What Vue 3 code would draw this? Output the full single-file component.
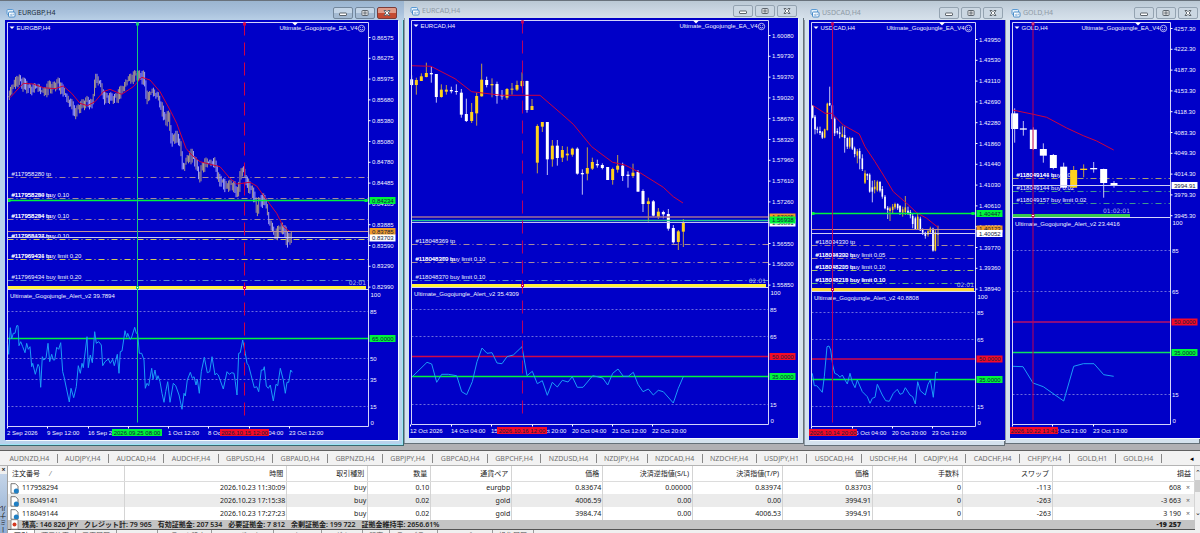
<template>
    <div class="terminal">
        <main class="workspace">
            <section v-for="c in charts" :key="c.name" class="window" :class="[c.kind, { active: c.active }]">
                <header class="titlebar">
                    <svg class="app-icon" viewBox="0 0 10 10">
                        <rect x="1" y="1.5" width="6.5" height="5" rx="1" fill="#e4f1fc" stroke="#5a9ad4" />
                        <rect x="2.5" y="4" width="6.5" height="5" rx="1" fill="#fff" stroke="#4a8cc8" />
                        <path d="M4.3 7.7V6.2M5.8 8V5.7M7.3 7.2V5.7" stroke="#4a8cc8" stroke-width=".7" />
                    </svg>
                    <h2>{{ c.name }},H4</h2>
                    <div class="controls">
                        <button type="button" aria-label="Minimize">
                            <svg viewBox="0 0 10 8"><rect x="1.5" y="4" width="7" height="2.5" rx=".5" /></svg>
                        </button>
                        <button type="button" aria-label="Maximize">
                            <svg viewBox="0 0 10 8"><rect x="2" y="1.5" width="6" height="5" rx=".5" /><rect x="4" y="3" width="2" height="2" /></svg>
                        </button>
                        <button type="button" class="close" aria-label="Close">
                            <svg viewBox="0 0 10 8"><path d="M2 1.5h2l1 1.2 1-1.2h2L6.2 4 8 6.5H6L5 5.3 4 6.5H2L3.8 4z" /></svg>
                        </button>
                    </div>
                </header>

                <svg class="chart" :viewBox="c.box">
                    <!-- order levels -->
                    <template v-for="o in c.orders" :key="o.y">
                        <line :x1="c.l" :x2="c.r" :y1="o.y" :y2="o.y" :stroke="o.color" stroke-dasharray="6 3 1 3" />
                        <text v-for="t in o.texts" :key="t" :x="c.l + 4" :y="o.y - 2">{{ t }}</text>
                    </template>

                    <!-- prices and moving average -->
                    <g v-for="(k, i) in c.candles" :key="i" :fill="k[5] ? '#ffd21c' : '#fff'">
                        <rect class="wick" :x="c.ox + k[0] / 3 - 0.5" :y="k[1] / 3" width="1" :height="(k[2] - k[1]) / 3" />
                        <rect :x="c.ox + k[0] / 3 - c.body / 2" :y="k[3] / 3" :width="c.body" :height="(k[4] - k[3]) / 3" />
                    </g>
                    <template v-if="c.bars">
                        <path class="bars down" :d="c.bars.down" />
                        <path class="bars up" :d="c.bars.up" />
                    </template>
                    <polyline class="average" :points="path(c.average, c.ox, 0)" />

                    <!-- price lines -->
                    <template v-for="p in c.prices" :key="p.y">
                        <line :x1="c.l" :x2="c.r" :y1="p.y" :y2="p.y" :stroke="p.color" :stroke-width="p.wide ? 1.4 : 1" />
                        <g v-if="p.ends" :fill="p.color">
                            <rect :x="c.l" :y="p.y - 1.5" width="3" height="3" />
                            <rect :x="c.r - 4" :y="p.y - 1.5" width="3" height="3" />
                        </g>
                    </template>

                    <!-- candle countdown -->
                    <rect :x="c.l" :y="c.split - 3.5" :width="c.timerEnd - c.l" height="3" :fill="c.timerColor" />
                    <text class="timer" :x="c.timerEnd" :y="c.split - 5">{{ c.timer }}</text>

                    <!-- indicator -->
                    <template v-for="v in c.levels" :key="v.n">
                        <line v-if="!v.color" class="level" :x1="c.l" :x2="c.r" :y1="v.y" :y2="v.y" />
                        <line v-else :x1="c.l" :x2="c.r" :y1="v.y" :y2="v.y" :stroke="v.color" stroke-width="1.5" />
                        <text v-if="!v.color" :x="c.r + 1.5" :y="v.y + 2">{{ v.n }}</text>
                    </template>
                    <text :x="c.r + 2" :y="c.split + 7">100</text>
                    <text :x="c.r + 2" :y="c.bottom - 2">0</text>
                    <polyline class="indicator" :points="path(c.indicator, c.ox, 220)" />
                    <text :x="c.l + 2.5" :y="c.split + 8">Ultimate_Gogojungle_Alert_v2 {{ c.value }}</text>

                    <!-- frame -->
                    <path class="frame" :d="`M${c.l} ${c.bottom}V${c.top}H${c.r}V${c.bottom}ZM${c.l} ${c.split}H${c.r}`" />
                    <path :d="`M${c.l + 2} ${c.top + 4}h5l-2.5 2.5z`" fill="#fff" />
                    <path :d="`M${c.marker - 3} ${c.top}h6l-3 3z`" fill="#fff" />
                    <text :x="c.l + 9" :y="c.top + 7">{{ c.name }},H4</text>
                    <text class="end" :x="c.r - 11" :y="c.top + 7">Ultimate_Gogojungle_EA_V4</text>
                    <g :transform="`translate(${c.r - 7} ${c.top + 6})`" fill="none" stroke="#fff" stroke-width=".7">
                        <circle r="3.2" />
                        <path d="M-1.7.7Q0 2.5 1.7.7M-1.2-1.4v1M1.2-1.4v1" />
                    </g>

                    <!-- vertical marks -->
                    <g v-for="v in c.verticals" :key="v.x" :stroke="v.color">
                        <line :x1="v.x" :x2="v.x" :y1="c.top" :y2="c.bottom - 4" :stroke-dasharray="v.dash ? '13 7' : 'none'" />
                        <rect :x="v.x - 1" :y="c.top + 0.5" width="2" height="2" fill="#fff" />
                        <rect :x="v.x - 1" :y="c.split - 3" width="2" height="2" fill="#fff" />
                    </g>

                    <!-- price scale -->
                    <g v-for="(n, i) in c.scale" :key="n">
                        <line :x1="c.r" :x2="c.r + 2" :y1="c.scaleTop + i * 20.8" :y2="c.scaleTop + i * 20.8" stroke="#fff" />
                        <text :x="c.r + 3.5" :y="c.scaleTop + 2 + i * 20.8">{{ n }}</text>
                    </g>
                    <g v-for="t in c.tags" :key="t.y">
                        <rect :x="c.r + 1" :y="t.y - 3.5" width="26" height="7" :fill="t.color" />
                        <text class="dark" :x="c.r + 3.5" :y="t.y + 2">{{ t.n }}</text>
                    </g>

                    <!-- time scale -->
                    <g v-for="d in c.dates" :key="d[0]">
                        <line :x1="d[0] + 0.5" :x2="d[0] + 0.5" :y1="c.bottom" :y2="c.bottom + 2" stroke="#fff" />
                        <text :x="d[0]" :y="c.bottom + 8">{{ d[1] }}</text>
                    </g>
                    <g v-for="d in c.stamps" :key="d.x">
                        <rect :x="d.x" :y="c.bottom + 2.5" :width="d.w" height="7" :fill="d.color" />
                        <text class="dark mid" :x="d.x + d.w / 2" :y="c.bottom + 8">{{ d.n }}</text>
                    </g>
                </svg>
            </section>
        </main>

        <nav class="symbols">
            <div class="symbol-list">
                <button v-for="s in symbols" :key="s" type="button">{{ s }}</button>
            </div>
            <span class="arrow">◂</span>
        </nav>

        <section class="toolbox">
            <aside class="side">
                <button type="button" aria-label="Close">×</button>
                <div class="side-title"><span>ターミナル</span></div>
            </aside>

            <div class="orders">
                <table>
                    <colgroup>
                        <col v-for="(w, i) in widths" :key="i" :style="{ width: w / 11.87 + '%' }">
                    </colgroup>
                    <thead>
                        <tr>
                            <th v-for="(h, i) in headings" :key="i">{{ h }}<i v-if="i == 0">/</i></th>
                        </tr>
                    </thead>
                    <tbody>
                        <tr v-for="row in rows" :key="row[0]">
                            <td v-for="(cell, i) in row" :key="i">
                                <svg v-if="i == 0" class="doc" viewBox="0 0 9 11">
                                    <path d="M1 .7h4.5L8 3.2v7H1z" fill="#fff" stroke="#555" stroke-width=".8" />
                                    <circle cx="6.3" cy="8" r="2.5" fill="#1f7fc4" />
                                </svg>{{ cell }}<button v-if="i == row.length - 1" type="button" aria-label="Close order">×</button>
                            </td>
                        </tr>
                    </tbody>
                </table>

                <div class="summary">
                    <svg class="doc" viewBox="0 0 9 11">
                        <path d="M1 .7h7v9.5H1z" fill="#fff" stroke="#777" stroke-width=".8" />
                        <circle cx="4.5" cy="5.5" r="2" fill="#d43a22" />
                    </svg>
                    <span v-for="s in summary" :key="s">{{ s }}</span>
                    <strong>-19 257</strong>
                </div>

                <nav class="pages">
                    <button v-for="(p, i) in pages" :key="p" type="button" :class="{ select: i == 0 }">{{ p }}</button>
                </nav>
            </div>

            <div class="scroll"><span>⌃</span><div class="thumb"></div><span>⌄</span></div>
        </section>
    </div>
</template>

<script setup>
const GREEN = '#00f43c';
const RED = '#f40a28';
const TAN = '#a88c9c';
const ORANGE = '#f09a28';

// curves and candles are stored in thirds of a chart unit
function path(points, ox, oy) {
    const out = [];
    for (let i = 0; i < points.length; i += 2) {
        out.push(`${(ox + points[i] / 3).toFixed(1)},${(oy + points[i + 1] / 3).toFixed(1)}`);
    }
    return out.join(' ');
}

function makeBars(points) {
    let up = '';
    let down = '';
    let i = 0;
    let n = 0;
    let last = points[1];
    for (let x = points[0]; x <= points[points.length - 2]; x += 3.76) {
        while (i < points.length - 4 && x > points[i + 2]) i += 2;
        const t = (x - points[i]) / (points[i + 2] - points[i]);
        const y = points[i + 1] + t * (points[i + 3] - points[i + 1]);
        const a = 2 + ((n * n * 7 + n) % 19);
        const b = 2 + ((n * n * 5 + n * 3) % 23);
        const px = (x / 3).toFixed(1);
        const bar = `M${px} ${((Math.min(y, last) - a) / 3).toFixed(1)}V${((Math.max(y, last) + b) / 3).toFixed(1)}`;
        if (n % 3 == 0 || y < last) up += bar;
        else down += bar;
        last = y;
        n++;
    }
    return { up, down };
}

const charts = [
    {
        name: 'EURGBP', kind: 'wide', active: true, box: '5 20 393 420', ox: 0,
        l: 7.5, r: 368.5, top: 22.5, split: 289.5, bottom: 426.5, marker: 295, value: '39.7894',
        timer: '02:01', timerEnd: 366, timerColor: '#fff23c', body: 1,
        scaleTop: 37.5,
        scale: ['0.86575', '0.86275', '0.85975', '0.85680', '0.85380', '0.85080', '0.84780', '0.84485', '0.84185', '0.83885', '0.83590', '0.83290', '0.82990'],
        tags: [
            { y: 200.5, n: '0.84234', color: GREEN },
            { y: 231.5, n: '0.83785', color: ORANGE },
            { y: 238, n: '0.83703', color: '#fff' }
        ],
        prices: [
            { y: 200.5, color: GREEN, wide: true, ends: true },
            { y: 231.5, color: '#c09098' },
            { y: 237.5, color: '#c8c8f4' }
        ],
        orders: [
            { y: 177.5, color: TAN, texts: ['#117958280 tp'] },
            { y: 198.5, color: TAN, texts: ['#117958280 buy 0.10', '#117958294 tp'] },
            { y: 219.5, color: TAN, texts: ['#117958294 buy 0.10', '#117958284 tp'] },
            { y: 239.5, color: '#d4cc58', texts: ['#117969434 buy 0.10', '#117958137 tp'] },
            { y: 259.5, color: '#d4cc58', texts: ['#117969431 buy limit 0.20', '#117969434 tp'] },
            { y: 280.5, color: '#5a8cd0', texts: ['#117969434 buy limit 0.20'] }
        ],
        levels: [
            { y: 311.5, n: 85 }, { y: 338.5, n: 65, color: GREEN }, { y: 358.5, n: 50 }, { y: 379.5, n: 35 }, { y: 406.5, n: 15 }
        ],
        verticals: [{ x: 137.5, color: '#18c878' }, { x: 244.5, color: '#d00048', dash: true }],
        dates: [[7, '2 Sep 2026'], [47, '9 Sep 12:00'], [88, '16 Sep 20:00'], [128, ''], [168, '1 Oct 12:00'], [208, '8 Oct 20:00'], [249, '16 Oct 04:00'], [289, '23 Oct 12:00']],
        stamps: [
            { x: 112, w: 50, n: '2026.09.25 08:00', color: GREEN },
            { x: 220, w: 49, n: '2026.10.15 12:00', color: RED }
        ],
        candles: [],
        bars: makeBars([24, 290, 40, 255, 55, 230, 70, 255, 90, 262, 110, 262, 125, 275, 150, 260, 175, 245, 190, 275, 205, 305, 222, 335, 240, 315, 262, 300, 277, 310, 285, 240, 300, 250, 312, 290, 345, 290, 365, 275, 378, 245, 400, 225, 415, 220, 430, 235, 440, 290, 455, 275, 472, 290, 485, 320, 495, 360, 505, 350, 515, 425, 525, 400, 538, 425, 548, 510, 560, 475, 575, 465, 590, 490, 597, 535, 605, 500, 615, 485, 640, 490, 655, 530, 675, 555, 700, 550, 713, 590, 720, 530, 728, 505, 740, 545, 755, 570, 765, 595, 770, 640, 775, 600, 795, 600, 805, 660, 823, 705, 833, 690, 845, 675, 855, 700, 862, 725, 870, 705, 877, 705]),
        average: [30, 293, 70, 250, 100, 252, 130, 263, 165, 266, 190, 258, 215, 280, 240, 310, 262, 317, 285, 305, 310, 275, 330, 268, 365, 283, 400, 260, 425, 232, 450, 240, 480, 275, 510, 330, 530, 370, 558, 445, 575, 465, 600, 485, 660, 500, 690, 535, 710, 552, 750, 547, 770, 558, 800, 600, 830, 640, 850, 680, 870, 695],
        indicator: [22, 365, 26, 403, 31, 323, 35, 357, 40, 340, 45, 340, 50, 317, 54, 317, 57, 377, 62, 365, 68, 380, 75, 398, 80, 370, 85, 388, 90, 380, 95, 440, 98, 430, 106, 463, 114, 433, 118, 440, 122, 502, 127, 410, 131, 420, 138, 415, 144, 370, 149, 425, 155, 403, 160, 420, 164, 420, 170, 382, 176, 388, 182, 368, 188, 455, 192, 470, 208, 546, 213, 505, 221, 533, 229, 500, 235, 437, 241, 460, 246, 430, 250, 443, 261, 350, 265, 443, 271, 405, 277, 428, 284, 335, 289, 370, 296, 365, 304, 375, 308, 437, 315, 425, 325, 417, 331, 430, 338, 418, 343, 437, 352, 403, 357, 460, 361, 395, 366, 393, 375, 332, 380, 352, 383, 340, 390, 358, 394, 355, 404, 322, 409, 340, 413, 340, 418, 400, 425, 400, 432, 420, 436, 505, 441, 490, 446, 497, 455, 445, 459, 478, 465, 450, 470, 480, 474, 467, 480, 485, 486, 520, 492, 547, 497, 515, 503, 485, 510, 547, 520, 490, 527, 497, 537, 525, 546, 568, 552, 520, 556, 528, 562, 480, 571, 457, 577, 475, 582, 470, 588, 495, 592, 478, 598, 520, 604, 455, 613, 412, 622, 458, 629, 455, 636, 410, 645, 465, 649, 460, 655, 465, 670, 507, 681, 455, 688, 463, 695, 458, 702, 460, 706, 485, 711, 525, 716, 400, 721, 398, 728, 360, 736, 400, 741, 430, 746, 437, 757, 480, 763, 503, 770, 500, 776, 515, 784, 450, 790, 450, 793, 440, 799, 498, 805, 505, 811, 495, 820, 543, 828, 493, 833, 497, 841, 445, 850, 480, 856, 520, 861, 487, 866, 487, 872, 450, 877, 457]
    },
    {
        name: 'EURCAD', kind: 'wide raised', box: '409 18 389 420', ox: 405,
        l: 411.5, r: 768.5, top: 20.5, split: 287.5, bottom: 424.5, marker: 696, value: '35.4309',
        timer: '02:01', timerEnd: 766, timerColor: '#fff23c', body: 3,
        scaleTop: 35.5,
        scale: ['1.60080', '1.59730', '1.59370', '1.59020', '1.58670', '1.58320', '1.57960', '1.57610', '1.57260', '1.56900', '1.56550', '1.56200', '1.55850'],
        tags: [
            { y: 217, n: '1.57005', color: ORANGE },
            { y: 223, n: '1.56891', color: '#fff' },
            { y: 220, n: '1.56938', color: GREEN }
        ],
        prices: [
            { y: 217, color: '#a07098', wide: true },
            { y: 220.5, color: '#20c890', wide: true },
            { y: 222.5, color: '#c0c0f4' }
        ],
        orders: [
            { y: 244.5, color: TAN, texts: ['#118048369 tp'] },
            { y: 262.5, color: TAN, texts: ['#118048369 buy limit 0.10', '#118048370 tp'] },
            { y: 280.5, color: '#5a8cd0', texts: ['#118048370 buy limit 0.10'] }
        ],
        levels: [
            { y: 309.5, n: 85 }, { y: 336.5, n: 65 }, { y: 356.5, n: 50, color: '#d00848' }, { y: 376.5, n: 35, color: GREEN }, { y: 404.5, n: 15 }
        ],
        verticals: [{ x: 522.5, color: '#b80060', dash: true }],
        dates: [[410, '12 Oct 2026'], [451, '14 Oct 04:00'], [491, '15 Oct 12:00'], [532, '16 Oct 20:00'], [572, '20 Oct 04:00'], [612, '21 Oct 12:00'], [652, '22 Oct 20:00']],
        stamps: [{ x: 497, w: 50, n: '2026.10.16 12:00', color: RED }],
        candles: [
            [20, 226, 258, 238, 255, 0], [34, 233, 284, 240, 255, 1], [49, 220, 243, 229, 243, 1], [64, 188, 232, 219, 231, 1],
            [79, 200, 248, 219, 223, 0], [94, 222, 308, 222, 291, 0], [109, 253, 293, 269, 291, 1], [124, 255, 284, 269, 275, 1],
            [139, 260, 280, 270, 274, 0], [154, 253, 284, 273, 276, 0], [169, 267, 353, 278, 344, 0], [184, 296, 366, 342, 363, 0],
            [200, 309, 369, 336, 363, 1], [215, 278, 377, 288, 340, 1], [230, 191, 290, 239, 289, 1], [245, 230, 262, 240, 255, 0],
            [261, 235, 292, 252, 256, 1], [276, 245, 311, 252, 288, 0], [291, 270, 299, 285, 289, 0], [306, 264, 299, 267, 293, 1],
            [321, 249, 284, 266, 269, 1], [336, 242, 273, 255, 269, 1], [351, 217, 262, 243, 258, 1], [366, 242, 338, 243, 330, 0],
            [381, 297, 330, 318, 330, 1], [397, 373, 520, 378, 488, 1], [412, 366, 396, 366, 380, 1], [427, 366, 525, 366, 478, 0],
            [442, 420, 500, 437, 478, 1], [457, 420, 497, 437, 474, 0], [472, 438, 486, 450, 473, 1], [487, 440, 482, 461, 466, 1],
            [502, 443, 470, 446, 464, 1], [517, 442, 524, 446, 521, 0], [532, 508, 584, 519, 523, 0], [547, 442, 541, 504, 521, 1],
            [562, 473, 510, 486, 506, 1], [577, 479, 503, 492, 496, 0], [592, 490, 508, 495, 504, 0], [608, 501, 540, 501, 540, 0],
            [623, 503, 554, 507, 540, 1], [638, 465, 518, 497, 509, 1], [653, 488, 543, 497, 528, 0], [669, 514, 563, 524, 528, 0],
            [684, 491, 534, 518, 528, 1], [699, 510, 575, 516, 575, 0], [714, 568, 636, 573, 612, 0], [730, 593, 665, 604, 612, 1],
            [745, 600, 650, 604, 647, 0], [760, 624, 657, 635, 651, 1], [775, 632, 655, 636, 643, 0], [790, 627, 692, 642, 686, 0],
            [805, 675, 731, 684, 727, 0], [820, 690, 750, 694, 726, 1], [835, 657, 741, 669, 695, 1]
        ],
        average: [18, 197, 78, 199, 150, 236, 200, 275, 290, 286, 405, 286, 470, 342, 505, 373, 560, 440, 600, 470, 623, 487, 660, 495, 705, 518, 775, 562, 805, 590, 834, 609],
        indicator: [22, 470, 66, 427, 80, 432, 95, 487, 110, 463, 130, 463, 155, 467, 170, 515, 185, 524, 202, 485, 216, 425, 231, 384, 246, 400, 261, 398, 276, 429, 291, 431, 306, 410, 325, 405, 351, 380, 366, 467, 382, 454, 397, 491, 412, 482, 427, 526, 442, 487, 457, 501, 472, 481, 489, 486, 502, 470, 517, 502, 534, 502, 563, 467, 593, 474, 608, 495, 623, 460, 639, 447, 655, 469, 670, 469, 685, 457, 699, 493, 714, 515, 730, 507, 745, 525, 760, 511, 775, 515, 805, 549, 820, 505, 835, 470]
    },
    {
        name: 'USDCAD', kind: 'narrow', box: '809 20 196 420', ox: 800,
        l: 811.5, r: 975.5, top: 22.5, split: 291.5, bottom: 426.5, marker: 942, value: '40.8808',
        timer: '02:01', timerEnd: 974, timerColor: '#ffd83c', body: 1.6,
        scaleTop: 39.5,
        scale: ['1.43950', '1.43530', '1.43110', '1.42690', '1.42280', '1.41860', '1.41440', '1.41030', '1.40610', '1.40190', '1.39770', '1.39360', '1.38940'],
        tags: [
            { y: 213.5, n: '1.40447', color: GREEN },
            { y: 229, n: '1.40123', color: ORANGE },
            { y: 233.5, n: '1.40052', color: '#fff' }
        ],
        prices: [
            { y: 213.5, color: GREEN, wide: true, ends: true },
            { y: 229.5, color: '#c09098' },
            { y: 233.5, color: '#d0d0f4' }
        ],
        orders: [
            { y: 245.5, color: TAN, texts: ['#118034330 tp'] },
            { y: 258.5, color: TAN, texts: ['#118034330 buy limit 0.05', '#118048202 tp'] },
            { y: 270.5, color: '#a8c868', texts: ['#118048200 buy limit 0.10', '#118048215 tp'] },
            { y: 283.5, color: '#58b480', texts: ['#118048218 buy limit 0.10', '#118048219 buy limit 0.10'] }
        ],
        levels: [
            { y: 312.5, n: 85 }, { y: 339.5, n: 65 }, { y: 359, n: 50, color: '#d00848' }, { y: 379.5, n: 35, color: GREEN }, { y: 406.5, n: 15 }
        ],
        verticals: [{ x: 832.5, color: '#b80060' }],
        dates: [[811, ''], [852, '16 Oct 04:00'], [892, '20 Oct 20:00'], [932, '23 Oct 12:00']],
        stamps: [{ x: 809, w: 48, n: '2026.10.14 20:00', color: RED }],
        candles: [
            [38, 315, 355, 318, 353, 0], [45, 345, 403, 350, 388, 0], [52, 380, 400, 386, 390, 0], [60, 380, 405, 393, 399, 0],
            [67, 393, 417, 397, 413, 0], [74, 386, 415, 388, 413, 1], [82, 308, 392, 311, 390, 1], [89, 260, 318, 309, 316, 0],
            [97, 314, 358, 316, 357, 0], [104, 352, 408, 356, 400, 0], [112, 385, 403, 393, 398, 0], [119, 380, 415, 397, 402, 0],
            [127, 377, 412, 403, 411, 1], [134, 380, 458, 405, 414, 0], [142, 412, 447, 414, 440, 0], [149, 410, 446, 414, 440, 1],
            [157, 412, 450, 414, 446, 0], [164, 440, 472, 445, 462, 0], [172, 447, 490, 454, 467, 1], [179, 445, 508, 453, 476, 0],
            [187, 463, 513, 475, 507, 0], [195, 511, 552, 520, 548, 1], [202, 520, 540, 522, 527, 0], [209, 520, 578, 524, 575, 0],
            [217, 542, 607, 562, 575, 0], [224, 540, 580, 560, 568, 1], [232, 541, 575, 545, 571, 1], [240, 545, 577, 545, 572, 0],
            [247, 558, 596, 567, 590, 0], [255, 585, 628, 590, 625, 0], [263, 618, 657, 623, 630, 0], [270, 620, 663, 625, 633, 1],
            [278, 612, 640, 620, 630, 1], [285, 608, 628, 612, 622, 1], [293, 610, 630, 612, 625, 0], [300, 615, 645, 618, 636, 0],
            [308, 620, 650, 628, 638, 1], [316, 588, 645, 622, 636, 1], [324, 620, 645, 632, 640, 0], [331, 630, 655, 636, 646, 0],
            [338, 642, 685, 648, 672, 0], [346, 650, 690, 655, 688, 0], [353, 640, 690, 650, 688, 1], [361, 650, 692, 656, 692, 0],
            [368, 685, 705, 687, 698, 0], [376, 695, 716, 698, 708, 0], [384, 690, 710, 694, 704, 1], [391, 680, 700, 685, 696, 1],
            [399, 683, 755, 686, 752, 0], [406, 690, 754, 697, 752, 1], [414, 677, 738, 700, 704, 1]
        ],
        average: [38, 316, 75, 340, 95, 340, 130, 375, 178, 402, 195, 440, 225, 485, 250, 525, 280, 575, 320, 610, 350, 638, 380, 655, 405, 675, 414, 682],
        indicator: [37, 460, 43, 497, 50, 497, 57, 505, 67, 517, 73, 470, 81, 380, 87, 378, 92, 390, 98, 435, 104, 460, 113, 464, 120, 472, 127, 465, 135, 480, 142, 492, 150, 460, 157, 487, 165, 503, 172, 480, 187, 515, 202, 530, 210, 550, 217, 535, 225, 532, 232, 493, 247, 525, 257, 542, 268, 544, 280, 520, 292, 508, 300, 523, 308, 520, 316, 503, 330, 525, 338, 530, 346, 552, 353, 485, 361, 512, 376, 525, 384, 493, 391, 480, 400, 532, 407, 457, 414, 457]
    },
    {
        name: 'GOLD', kind: 'narrow last', box: '1010 20 190 418', ox: 1000,
        l: 1012.5, r: 1170.5, top: 22.5, split: 217.5, bottom: 424.5, marker: 1138, value: '23.4416',
        timer: '01:02:01', timerEnd: 1130, timerColor: '#38c850', body: 7,
        scaleTop: 28.5,
        scale: ['4257.30', '4222.30', '4187.30', '4153.30', '4118.30', '4083.30', '4049.30', '4014.30', '3979.30', '3945.30'],
        tags: [
            { y: 185.5, n: '3994.91', color: '#fff' }
        ],
        prices: [{ y: 185.5, color: '#d0d0f4' }],
        orders: [
            { y: 178.5, color: '#a8a070', texts: ['#118049144 buy 0.02', '#118049141 tp'] },
            { y: 191.5, color: '#409890', texts: ['#118049144 buy 0.02'] },
            { y: 203.5, color: '#409890', texts: ['#118049157 buy limit 0.02'] }
        ],
        levels: [
            { y: 250.5, n: 85 }, { y: 291.5, n: 65 }, { y: 322, n: 50, color: '#b81068' }, { y: 352.5, n: 35, color: '#10e060' }, { y: 394.5, n: 15 }
        ],
        verticals: [{ x: 1033, color: '#c00050' }],
        dates: [[1012, ''], [1052, '22 Oct 21:00'], [1093, '23 Oct 13:00']],
        stamps: [{ x: 1010, w: 48, n: '2026.10.22 13:41', color: RED }],
        candles: [
            [44, 325, 428, 340, 387, 0], [70, 363, 407, 385, 389, 0], [100, 382, 450, 389, 447, 0], [130, 430, 488, 447, 467, 0],
            [160, 462, 508, 465, 504, 0], [191, 488, 563, 500, 563, 0], [221, 498, 563, 510, 563, 1], [251, 493, 532, 506, 510, 1],
            [281, 486, 518, 504, 508, 0], [311, 506, 593, 507, 549, 0], [342, 543, 563, 549, 555, 0]
        ],
        average: [38, 330, 100, 343, 140, 352, 200, 384, 250, 407, 290, 423, 341, 450],
        indicator: [38, 439, 69, 440, 99, 489, 130, 500, 191, 543, 221, 439, 250, 431, 282, 431, 311, 464, 341, 469]
    }
];

// the fixed indicator levels are tagged on the scale too
charts.forEach((c) => {
    c.levels.forEach((v) => {
        if (v.color) c.tags.push({ y: v.y, n: v.n + '.0000', color: v.n == 50 ? RED : GREEN });
    });
});

const symbols = ['AUDNZD,H4', 'AUDJPY,H4', 'AUDCAD,H4', 'AUDCHF,H4', 'GBPUSD,H4', 'GBPAUD,H4', 'GBPNZD,H4', 'GBPJPY,H4', 'GBPCAD,H4', 'GBPCHF,H4', 'NZDUSD,H4', 'NZDJPY,H4', 'NZDCAD,H4', 'NZDCHF,H4', 'USDJPY,H1', 'USDCAD,H4', 'USDCHF,H4', 'CADJPY,H4', 'CADCHF,H4', 'CHFJPY,H4', 'GOLD,H1', 'GOLD,H4'];

const widths = [117, 162, 81, 63, 81, 91, 90, 90, 90, 90, 90, 142];
const headings = ['注文番号', '時間', '取引種別', '数量', '通貨ペア', '価格', '決済逆指値(S/L)', '決済指値(T/P)', '価格', '手数料', 'スワップ', '損益'];
const rows = [
    ['117958294', '2026.10.23 11:30:09', 'buy', '0.10', 'eurgbp', '0.83674', '0.00000', '0.83974', '0.83703', '0', '-113', '608'],
    ['118049141', '2026.10.23 17:15:38', 'buy', '0.02', 'gold', '4006.59', '0.00', '0.00', '3994.91', '0', '-263', '-3 663'],
    ['118049144', '2026.10.23 17:27:23', 'buy', '0.02', 'gold', '3984.74', '0.00', '4006.53', '3994.91', '0', '-263', '3 190']
];
const summary = ['残高: 146 826 JPY', 'クレジット計: 79 965', '有効証拠金: 207 534', '必要証拠金: 7 812', '余剰証拠金: 199 722', '証拠金維持率: 2656.61%'];
const pages = ['取引', '運用比率', '口座履歴', 'ニュース', 'アラーム設定', 'メールボックス', 'マーケット', 'シグナル', '記事', 'ライブラリ', 'エキスパート', '操作履歴'];
</script>

<style>
body {
    background: #f0f0f0;
    overflow: hidden;
}
</style>

<style scoped>
.terminal {
    font-family: "Noto Sans", "Noto Sans CJK JP", sans-serif;
    font-size: 7px;
    line-height: 9px;
    color: #222;
    height: 100vh;
    overflow: hidden;
}

button {
    font: inherit;
    color: inherit;
    background: none;
    border: 0;
    padding: 0;
}

.workspace {
    display: grid;
    grid-template-columns: 404fr 400fr 201fr 195fr;
    align-items: start;
    padding-bottom: 4px;
    background: #b0b0b4;
    border-bottom: 1px solid #606060;
}

.window {
    box-sizing: border-box;
    min-width: 0;
    padding: 0 6px 6px 5px;
    background: #d4e2ee;
    box-shadow: inset 0 1px #69727c, inset -1px -1px #647078, inset 1px 0 #8f9ba6;
}

.window.narrow {
    padding-right: 0;
}

.window.active {
    background: #b8d2ec;
    box-shadow: inset 0 1px #59646e, inset -1px -1px #386870, inset -2px -2px #9ce4f4;
}

.titlebar {
    display: flex;
    align-items: center;
    box-sizing: border-box;
    height: 20px;
    padding: 4px 7px 0 6px;
    margin: 0 -6px 0 -5px;
    background: linear-gradient(#bccad6 1px, #c8d4e0 8px, #d6e1eb);
    border-top: 1px solid #69727c;
}

.active .titlebar {
    background: linear-gradient(#9bb5d0, #a9c1dc 60%, #b8cfe6);
}

.narrow .titlebar {
    margin-right: 0;
    padding-right: 2px;
}

.raised .titlebar {
    height: 18px;
    padding-top: 2px;
}

.app-icon {
    width: 10px;
    height: 10px;
    margin-right: 2px;
}

h2 {
    flex: 1;
    margin: 0;
    font-size: 7px;
    font-weight: 400;
    color: #8e9aa6;
}

.active h2 {
    color: #22303e;
}

.controls {
    display: flex;
    gap: 2px;
}

.controls button {
    display: flex;
    align-items: center;
    justify-content: center;
    box-sizing: border-box;
    width: 20px;
    height: 12px;
    border: 1px solid #94a3b1;
    border-radius: 2px;
    background: #cbd7e2;
}

.controls svg {
    width: 10px;
    height: 8px;
    fill: #fff;
    stroke: #5c646c;
}

.active .controls button {
    border-color: #73879c;
    background: linear-gradient(#c4d5e7 50%, #a4bad2 50%);
}

.active .controls .close {
    border-color: #7c3c38;
    background: linear-gradient(#e09a88 50%, #c44a32 50%);
}

.chart {
    display: block;
    width: 100%;
    background: #0000c8;
    box-shadow: 1px 1px #f4faff;
}

.chart text {
    font-family: "Liberation Sans", sans-serif;
    font-size: 6px;
    fill: #f4f4ff;
}

.chart .end,
.chart .timer {
    text-anchor: end;
}

.chart .mid {
    text-anchor: middle;
}

.chart .timer {
    font-family: "DejaVu Sans", sans-serif;
    fill: #a8b4e8;
}

.chart .dark {
    fill: #102040;
}

.wick {
    opacity: 0.75;
}

.bars {
    fill: none;
    stroke-width: 1;
}

.up {
    stroke: #a8988c;
}

.down {
    stroke: #a0a0f4;
}

.average,
.indicator {
    fill: none;
    stroke: #d0003c;
    stroke-width: 1;
}

.indicator {
    stroke: #1c9cf8;
}

.level {
    stroke: #6c6cdc;
    stroke-dasharray: 2 2;
}

.frame {
    fill: none;
    stroke: #d4d4fa;
}

.symbols {
    display: flex;
    align-items: center;
    justify-content: space-between;
    height: 14px;
    padding: 0 6px 0 2px;
    background: #f2f2f2;
    border-bottom: 1px solid #b4b4b4;
    color: #707070;
}

.symbol-list {
    display: flex;
    width: 97.3%;
}

.symbol-list button {
    flex: 1 1 auto;
    border-right: 1px solid #888;
}

.arrow {
    color: #000;
}

.toolbox {
    display: flex;
}

.side {
    width: 7px;
    display: flex;
    flex-direction: column;
    border-right: 1px solid #a0a0a0;
}

.side button {
    height: 8px;
    line-height: 6px;
    font-weight: 700;
}

.side-title {
    flex: 1;
    background: linear-gradient(#88a8d0, #c4d4e8);
    writing-mode: vertical-rl;
    transform: rotate(180deg);
    line-height: 7px;
}

.orders {
    flex: 1;
    min-width: 0;
}

table {
    width: 100%;
    table-layout: fixed;
    border-collapse: collapse;
    background: #fff;
}

th,
td {
    box-sizing: border-box;
    height: 13px;
    padding: 0 1px;
    border-right: 1px solid #d4d4d4;
    text-align: right;
    font-weight: 400;
    white-space: nowrap;
}

th {
    height: 15px;
    padding-right: 3px;
    border-bottom: 1px solid #dcdcdc;
}

th:first-child {
    text-align: left;
    padding-left: 4px;
}

th i {
    margin-left: 9px;
    color: #888;
}

td:first-child {
    text-align: left;
    padding-left: 2px;
}

td:last-child {
    padding-right: 4px;
}

td button {
    margin-left: 5px;
    color: #666;
}

tbody tr:nth-child(even) {
    background: #ebebeb;
}

.doc {
    width: 9px;
    height: 11px;
    margin: -2px 3px -2px 0;
    vertical-align: middle;
}

.summary {
    display: flex;
    align-items: center;
    gap: 6px;
    height: 9px;
    padding: 0 14px 0 2px;
    background: #c4c4c4;
    border-bottom: 1px solid #555;
    font-weight: 600;
}

.summary .doc {
    margin-right: -3px;
}

.summary strong {
    margin-left: auto;
}

.pages {
    display: flex;
    height: 10px;
    color: #555;
}

.pages button {
    padding: 0 6px;
    border-right: 1px solid #999;
    line-height: 7px;
}

.pages .select {
    background: #fff;
    color: #000;
}

.scroll {
    display: flex;
    flex-direction: column;
    align-items: center;
    width: 5px;
    background: #f0f0f0;
    line-height: 14px;
}

.thumb {
    width: 5px;
    height: 12px;
    margin-bottom: 14px;
    background: #cdcdcd;
}
</style>
